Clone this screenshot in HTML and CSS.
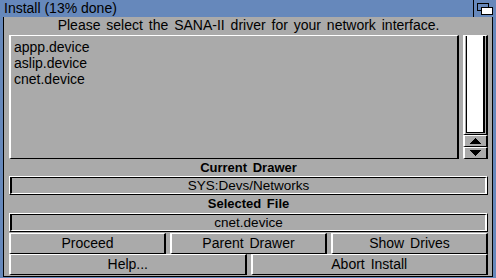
FILE: index.html
```html
<!DOCTYPE html>
<html>
<head>
<meta charset="utf-8">
<link rel="stylesheet" href="styles.css">
</head>
<body>
<div class="window">
  <div class="titlebar">
    <span class="title">Install (13% done)</span>
    <div class="depth">
      <svg width="19" height="17" viewBox="0 0 19 17" shape-rendering="crispEdges">
        <rect x="3.5" y="3.5" width="11" height="7" fill="#6688bb" stroke="#000"/>
        <rect x="7.5" y="7.5" width="11" height="7" fill="#fff" stroke="#000"/>
      </svg>
    </div>
  </div>
  <div class="content">
    <div class="prompt">Please select the SANA-II driver for your network interface.</div>
    <div class="listrow">
      <div class="listview">
        <div class="item">appp.device</div>
        <div class="item">aslip.device</div>
        <div class="item">cnet.device</div>
      </div>
      <div class="scroller">
        <div class="track"><div class="knob"></div></div>
        <div class="arrow">
          <svg width="11" height="6" viewBox="0 0 11 6" shape-rendering="crispEdges"><polygon points="5.5,0 11,6 0,6" fill="#000"/></svg>
        </div>
        <div class="arrow">
          <svg width="11" height="6" viewBox="0 0 11 6" shape-rendering="crispEdges"><polygon points="0,0 11,0 5.5,6" fill="#000"/></svg>
        </div>
      </div>
    </div>
    <div class="label">Current Drawer</div>
    <div class="field"><div class="field-inner">SYS:Devs/Networks</div></div>
    <div class="label label2">Selected File</div>
    <div class="field"><div class="field-inner">cnet.device</div></div>
    <div class="btnrow three">
      <div class="btn">Proceed</div>
      <div class="btn">Parent Drawer</div>
      <div class="btn">Show Drives</div>
    </div>
    <div class="btnrow two">
      <div class="btn">Help...</div>
      <div class="btn">Abort Install</div>
    </div>
  </div>
</div>
</body>
</html>
```
FILE: styles.css
```css
* { box-sizing: border-box; }
html, body { margin: 0; padding: 0; }
body {
  font-family: "Liberation Sans", Arial, sans-serif;
  font-size: 14px;
  color: #000;
  background: #aaaaaa;
}
.window {
  width: 496px;
  height: 278px;
  background: #6688bb;
  padding: 0 3px 1px 3px;
  display: flex;
  flex-direction: column;
}
.titlebar {
  height: 17px;
  display: flex;
  align-items: center;
}
.title {
  padding-left: 1px;
  font-size: 14px;
  line-height: 17px;
}
.depth {
  margin-left: auto;
  width: 20px;
  height: 17px;
  border-left: 1px solid #000;
  display: flex;
}
.content {
  flex: 1;
  background: #aaaaaa;
  border: 1px solid #000;
  border-top: none;
  padding: 0 4px 0 5px;
  display: flex;
  flex-direction: column;
}
.prompt {
  height: 18px;
  line-height: 17px;
  text-align: center;
  word-spacing: 2px;
}
.listrow {
  height: 124px;
  display: flex;
  gap: 4px;
}
.listview {
  width: 450px;
  border-style: solid;
  border-width: 1px 2px;
  border-color: #fff #000 #000 #fff;
  padding: 3px 0 0 3px;
}
.item {
  line-height: 16px;
  height: 16px;
}
.scroller {
  width: 25px;
  display: flex;
  flex-direction: column;
}
.track {
  height: 100px;
  border-style: solid;
  border-width: 1px 2px;
  border-color: #fff #000 #000 #fff;
  padding: 0 1px 1px 1px;
  display: flex;
}
.knob {
  flex: 1;
  background: #fff;
  border-style: solid;
  border-color: #000;
  border-width: 0 2px 1px 1px;
}
.arrow {
  height: 12px;
  border-style: solid;
  border-width: 1px 2px;
  border-color: #fff #000 #000 #fff;
  display: flex;
  align-items: center;
  justify-content: center;
}
.label {
  height: 17px;
  line-height: 17px;
  text-align: center;
  font-weight: bold;
  font-size: 13px;
  word-spacing: 2px;
}
.label2 {
  height: 18px;
}
.field {
  height: 19px;
  border-style: solid;
  border-width: 1px 1px;
  border-color: #fff #000 #000 #fff;
}
.field-inner {
  height: 100%;
  border-style: solid;
  border-width: 1px 2px 1px 2px;
  border-color: #000 #fff #fff #000;
  text-align: center;
  line-height: 15px;
  font-size: 13.5px;
  color: #000;
}
.btnrow {
  display: flex;
  gap: 4px;
  height: 21px;
}
.btnrow.three { margin-top: 1px; }
.btn {
  flex: 1;
  border-style: solid;
  border-width: 1px 2px;
  border-color: #fff #000 #000 #fff;
  text-align: center;
  line-height: 19px;
  word-spacing: 2px;
}
```
